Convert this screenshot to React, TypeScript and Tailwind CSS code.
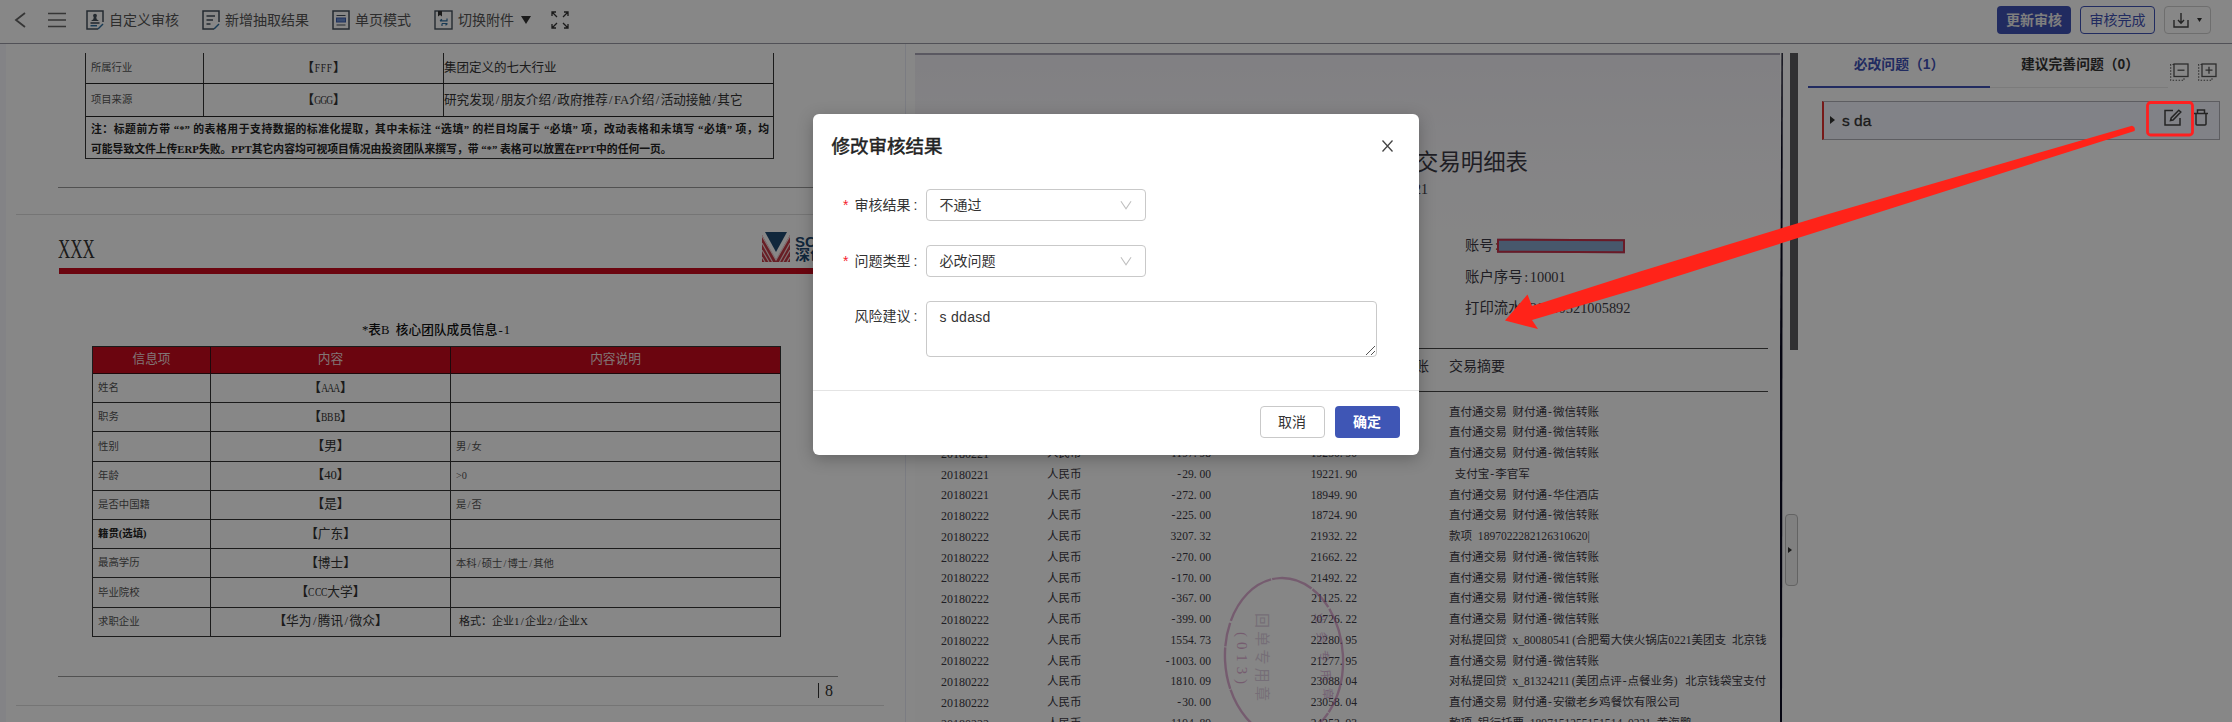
import type { ReactNode } from "react";

const sans = "font-['Liberation_Sans','Noto_Sans_CJK_SC',sans-serif]";
const song = "font-['Liberation_Serif','Noto_Sans_CJK_SC',serif]";

/* Half-width characters take half an em, as in a Chinese bitmap face. */
function Song({ text }: { text: string }) {
  return (
    <span>
      {text.split(/([. \-:/_(),])/).map((part, i) => {
        if (/^[\-:/_]$/.test(part)) {
          return <span key={i} className="inline-block w-[0.5em] text-center">{part}</span>;
        }
        if (part === "(") {
          return <span key={i} className="inline-block w-[0.5em] text-right">{part}</span>;
        }
        if (/^[. ),]$/.test(part)) {
          return <span key={i} className="inline-block w-[0.5em] whitespace-pre text-left">{part}</span>;
        }
        return part;
      })}
    </span>
  );
}

function Stretch({ className, children }: { className: string; children: ReactNode }) {
  return <div className={`whitespace-nowrap [text-align-last:justify] ${className}`}>{children}</div>;
}

function BackIcon() {
  return (
    <svg className="h-4 w-3" viewBox="0 0 12 16" fill="none" stroke="#666" strokeWidth="1.8">
      <path d="M11 1 L2 8 L11 15" />
    </svg>
  );
}

function MenuIcon() {
  return (
    <svg className="h-4 w-[18px]" viewBox="0 0 18 16" stroke="#666" strokeWidth="1.6">
      <path d="M0 1.5H18M0 8H18M0 14.5H18" />
    </svg>
  );
}

function AuditIcon() {
  return (
    <svg className="h-5 w-[18px]" viewBox="0 0 18 20" fill="none" stroke="#44505c" strokeWidth="1.5">
      <path d="M17 12V1H1V19H12" />
      <path d="M12 19L17 14" stroke="#2c6fa0" />
      <circle cx="9" cy="5.6" r="1.9" fill="#44505c" stroke="none" />
      <path d="M8 6h2l.7 3.2L13 11H5l2.300-1.800z" fill="#44505c" stroke="none" />
      <path d="M4.500 13H13.500" stroke="#3a4654" />
      <path d="M4.500 15.700H11" stroke="#2c6fa0" />
    </svg>
  );
}

function ExtractIcon() {
  return (
    <svg className="h-5 w-[18px]" viewBox="0 0 18 20" fill="none" stroke="#44505c" strokeWidth="1.5">
      <path d="M17 12V1H1V19H12" />
      <path d="M12 19L17 14" stroke="#2c6fa0" />
      <path d="M4.500 6H13M4.500 10H11M4.500 14H8.500" strokeWidth="1.3" />
    </svg>
  );
}

function PageIcon() {
  return (
    <svg className="h-5 w-[18px]" viewBox="0 0 18 20" fill="none" stroke="#44505c" strokeWidth="1.5">
      <rect x="1" y="1" width="16" height="18" />
      <path d="M4.500 5.500H13.500M4.500 15H13.500" strokeWidth="1.2" />
      <rect x="4.500" y="8" width="9" height="4" fill="#6a8fd0" stroke="#3d5fb0" strokeWidth="1" />
    </svg>
  );
}

function SwitchIcon() {
  return (
    <svg className="h-5 w-[19px]" viewBox="0 0 19 20" fill="none" stroke="#44505c" strokeWidth="1.4">
      <rect x="1" y="1" width="17" height="18" />
      <path d="M4 1V6.500L6 5L8 6.500V1z" fill="#333" stroke="none" />
      <path d="M13 8.500V10.800H6M8 13.500H13.500M8 13.500V16M6 10.800L8 9.300M13.500 13.500L11.500 15.200" stroke="#2c6fa0" strokeWidth="1.2" />
    </svg>
  );
}

function ExpandIcon() {
  return (
    <svg className="h-[18px] w-[18px]" viewBox="0 0 18 18" fill="none" stroke="#333" strokeWidth="1.3">
      <path d="M1 5V1H5M1 1L6 6M13 1H17V5M17 1L12 6M1 13V17H5M1 17L6 12M17 13V17H13M17 17L12 12" />
    </svg>
  );
}

function Toolbar() {
  return (
    <header className="flex h-11 shrink-0 items-center border-b border-[#9a9aa4] pb-[3px] text-[14px] text-[#555]">
      <div className="ml-[14px]"><BackIcon /></div>
      <div className="ml-[22px]"><MenuIcon /></div>
      <div className="ml-5 flex items-center gap-[5px]"><AuditIcon /><span>自定义审核</span></div>
      <div className="ml-[23px] flex items-center gap-[5px]"><ExtractIcon /><span>新增抽取结果</span></div>
      <div className="ml-[23px] flex items-center gap-[5px]"><PageIcon /><span>单页模式</span></div>
      <div className="ml-[23px] flex items-center gap-[5px]">
        <SwitchIcon />
        <span>切换附件</span>
        <svg className="ml-0.5 h-2 w-[10px]" viewBox="0 0 10 8" fill="#333"><path d="M0 0H10L5 8z" /></svg>
      </div>
      <div className="ml-[20px]"><ExpandIcon /></div>
      <div className="ml-auto flex items-center gap-[9px] pr-[21px] text-[14px]">
        <button className="flex h-7 w-[74px] items-center justify-center rounded bg-[#3f51b5] font-bold text-[#eee]">更新审核</button>
        <button className="flex h-7 w-[75px] items-center justify-center rounded border border-[#3f51b5] text-[#3f51b5]">审核完成</button>
        <button className="flex h-7 w-[47px] items-center justify-center gap-2 rounded-sm border border-[#d0d0d0]">
          <svg className="h-[15px] w-[16px]" viewBox="0 0 16 15" fill="none" stroke="#444" strokeWidth="1.4">
            <path d="M1 7V14H15V7M8 0V10M5 7L8 10.300L11 7" />
          </svg>
          <svg className="h-1 w-[5px]" viewBox="0 0 5 4" fill="#333"><path d="M0 0H5L2.500 4z" /></svg>
        </button>
      </div>
    </header>
  );
}

const members: { name: string; value: string; note?: string; bold?: boolean; last?: boolean }[] = [
  { name: "姓名", value: "AAA" },
  { name: "职务", value: "BBB" },
  { name: "性别", value: "男", note: "男/女" },
  { name: "年龄", value: "40", note: ">0" },
  { name: "是否中国籍", value: "是", note: "是/否" },
  { name: "籍贯(选填)", value: "广东", bold: true },
  { name: "最高学历", value: "博士", note: "本科/硕士/博士/其他" },
  { name: "毕业院校", value: "CCC大学" },
  { name: "求职企业", value: "华为/腾讯/微众", note: "格式：企业1/企业2/企业X", last: true },
];

function Bracket({ text }: { text: string }) {
  return (
    <span className="whitespace-nowrap">
      <b>【</b>
      {text.split(/([A-Z]+)/).map((part, i) =>
        /^[A-Z]+$/.test(part) ? (
          <span key={i} className="inline-flex">
            {part.split("").map((c, j) => (
              <span key={j} className="flex w-[0.5em] justify-center"><span className="scale-x-[0.75]">{c}</span></span>
            ))}
          </span>
        ) : (
          <Song key={i} text={part} />
        ),
      )}
      <b>】</b>
    </span>
  );
}

function Logo() {
  return (
    <svg className="h-[31px] w-7 shrink-0" viewBox="0 0 28 31">
      <path d="M0 3L14 28L28 3V30H0z" fill="#c43a46" />
      <path d="M0 4L14 28L28 4M0 11L10.500 30M0 18L7 30M0 25L3 30M28 11L17.500 30M28 18L21 30M28 25L25 30" fill="none" stroke="#f3d5d8" strokeWidth="1.2" />
      <path d="M3 0H25L14 20z" fill="#1f4a72" />
    </svg>
  );
}

function SlideDocument() {
  return (
    <section className={`w-[905px] shrink-0 overflow-hidden border-l-[6px] border-[#f8f8fd] pt-[9px] text-[#333] ${song}`}>
      <div className="ml-[79px] w-[689px] border-x-[1.5px] border-b-[1.5px] border-[#333]">
        <div className="grid h-[31px] grid-cols-[118px_240px_1fr] border-b-[1.5px] border-[#222] text-[12.5px]">
          <div className="flex items-center border-r-[1.5px] border-[#333] pl-[5px] text-[10.3px] text-[#555]">所属行业</div>
          <div className="flex items-center justify-center border-r-[1.5px] border-[#333]"><Bracket text="FFF" /></div>
          <div className="flex items-center"><span>集团定义的七大行业</span></div>
        </div>
        <div className="grid h-[33px] grid-cols-[118px_240px_1fr] border-b-[1.5px] border-[#222] text-[12.6px]">
          <div className="flex items-center border-r-[1.5px] border-[#333] pl-[5px] text-[10.3px] text-[#555]">项目来源</div>
          <div className="flex items-center justify-center border-r-[1.5px] border-[#333]"><Bracket text="GGG" /></div>
          <div className="flex items-center"><Song text="研究发现/朋友介绍/政府推荐/FA介绍/活动接触/其它" /></div>
        </div>
        <div className="h-[41px] pl-[5px] pt-[3px] text-[10.8px] font-bold leading-[19.500px] text-[#222]">
          <Stretch className="w-[678px]">注：标题前方带 “*” 的表格用于支持数据的标准化提取，其中未标注 “选填” 的栏目均属于 “必填” 项，改动表格和未填写 “必填” 项，均</Stretch>
          <Stretch className="w-[573px]">可能导致文件上传ERP失败。PPT其它内容均可视项目情况由投资团队来撰写，带 “*” 表格可以放置在PPT中的任何一页。</Stretch>
        </div>
      </div>
      <div className="ml-[52px] mt-[28px] w-[780px] border-t border-[#999]" />
      <div className="ml-[10px] mt-[26px] w-[868px] border-t border-[#ddd]" />

      <div className="ml-[52px] mt-[17px] flex h-[36px] w-[780px] items-start">
        <span className="w-[37px] text-[27px] leading-[34px]"><span className="inline-block origin-left scale-x-[0.63]">XXX</span></span>
        <div className="ml-[667px] flex items-center gap-[5px] font-['Liberation_Sans','Noto_Sans_CJK_SC',sans-serif] text-[#1f4a72]">
          <Logo />
          <div className="whitespace-nowrap text-[15px] font-bold leading-[13px]">SC<br />深创</div>
        </div>
      </div>
      <div className="ml-[53px] h-[6px] w-[780px] bg-[#ca0a1e]" />
      <h2 className="mt-[46px] w-[860px] text-center text-[12.7px] font-medium leading-5 text-[#111]">
        <Song text="*表B 核心团队成员信息-1" />
      </h2>
      <div className="ml-[86px] mt-[6px] w-[689px] border-x-[1.5px] border-t-[1.5px] border-[#333]">
        <div className="grid h-[27px] grid-cols-[118px_240px_1fr] border-b-[1.5px] border-[#3a1015] bg-[#ca0a1e] text-[12.7px] text-[#f3dede]">
          <div className="flex items-center justify-center border-r-[1.500px] border-[#3a1015]">信息项</div>
          <div className="flex items-center justify-center border-r-[1.500px] border-[#3a1015]">内容</div>
          <div className="flex items-center justify-center">内容说明</div>
        </div>
        {members.map((m) => (
          <div key={m.name} className="grid h-[29.200px] grid-cols-[118px_240px_1fr] border-b-[1.5px] border-[#333] text-[12.700px]">
            <div className={`flex items-center border-r-[1.5px] border-[#333] pl-[5px] text-[10.4px] ${m.bold ? "font-bold text-[#222]" : "text-[#555]"}`}>{m.name}</div>
            <div className="flex items-center justify-center border-r-[1.5px] border-[#333]"><Bracket text={m.value} /></div>
            <div className={`flex items-center ${m.last ? "pl-2 text-[11px]" : "pl-[5px] text-[10.300px] text-[#555]"}`}>
              {m.note && <Song text={m.note} />}
            </div>
          </div>
        ))}
      </div>
      <div className="ml-[52px] mt-[39px] w-[780px] border-t border-[#999]" />
      <div className="ml-[52px] flex h-[28px] w-[780px] items-center justify-end gap-[6px] pr-[5px] text-[16px]">
        <span className="h-[15px] w-px bg-[#333]" />8
      </div>
      <div className="ml-[10px] w-[868px] border-t border-[#ddd]" />
    </section>
  );
}

const pay = "直付通交易 财付通-微信转账";
const transactions: [string, string, string, string, string][] = [
  ["", "", "", "", pay],
  ["", "", "", "", pay],
  ["20180221", "人民币", "1197.98", "19250.90", pay],
  ["20180221", "人民币", "-29.00", "19221.90", " 支付宝-李官军"],
  ["20180221", "人民币", "-272.00", "18949.90", "直付通交易 财付通-华住酒店"],
  ["20180222", "人民币", "-225.00", "18724.90", pay],
  ["20180222", "人民币", "3207.32", "21932.22", "款项 1897022282126310620|"],
  ["20180222", "人民币", "-270.00", "21662.22", pay],
  ["20180222", "人民币", "-170.00", "21492.22", pay],
  ["20180222", "人民币", "-367.00", "21125.22", pay],
  ["20180222", "人民币", "-399.00", "20726.22", pay],
  ["20180222", "人民币", "1554.73", "22280.95", "对私提回贷 x_80080541(合肥蜀大侠火锅店0221美团支 北京钱"],
  ["20180222", "人民币", "-1003.00", "21277.95", pay],
  ["20180222", "人民币", "1810.09", "23088.04", "对私提回贷 x_81324211(美团点评-点餐业务) 北京钱袋宝支付"],
  ["20180222", "人民币", "-30.00", "23058.04", "直付通交易 财付通-安徽老乡鸡餐饮有限公司"],
  ["20180222", "人民币", "1194.89", "24252.93", "款项 银行托票 1897151255151514 0221 黄海鹏"],
];

function Stamp() {
  return (
    <svg className="absolute left-[306px] top-[520px] h-[166px] w-[126px] opacity-50" viewBox="0 0 126 166" fill="none">
      <ellipse cx="63" cy="83" rx="59" ry="80" stroke="#c060a8" strokeWidth="2.4" strokeDasharray="60 1 42 1 24 2" transform="rotate(-3 63 83)" />
      <g fill="#c0a4c4" fontFamily="'Liberation Serif','Noto Sans CJK SC',serif" fontSize="15">
        <text transform="translate(16 57) rotate(90)" textLength="52" fill="#c060a8">(013)</text>
        <text transform="translate(36 38) rotate(90)" textLength="88">回单专用章</text>
        <text transform="translate(94 38) rotate(84)" textLength="88" fill="#b872b8" fontSize="12">业务专用章</text>
      </g>
    </svg>
  );
}

function StatementScan() {
  return (
    <section className={`relative flex w-[893px] shrink-0 overflow-hidden border-l border-[#e9ebf6] pl-[9px] pt-[9px] text-[#3c3a44] ${song}`}>
      <div className="relative flex h-[669px] w-[865px] shrink-0 flex-col overflow-hidden border-t-2 border-[#aaa6b8] bg-[#fdfdfe] bg-[linear-gradient(180deg,#f3f1f7_0px,#fbfafd_110px,#fefefe_200px)]">
        <div className="ml-[501px] mt-[91px] flex h-[34px] shrink-0 items-center text-[22.4px]">交易明细表</div>
        <div className="ml-[499px] flex h-[18px] shrink-0 items-center text-[14px]">21</div>
        <div className="ml-[550px] mt-[40px] flex h-4 shrink-0 items-center text-[14.200px]">
          <Song text="账号:" />
          <span className="-ml-[3px] h-[14px] w-[128px] rotate-[0.3deg] border-2 border-[#c8324a] bg-[#86a6cc]" />
        </div>
        <div className="ml-[550px] mt-[16px] flex h-4 shrink-0 items-center text-[14.400px]"><Song text="账户序号:10001" /></div>
        <div className="ml-[550px] mt-[15px] flex h-4 shrink-0 items-center text-[14.400px]"><Song text="打印流水:20180521005892" /></div>
        <div className="mt-[31px] flex h-[44px] w-[853px] shrink-0 items-center border-y-[1.500px] border-[#444] pb-[7px] text-[14px]">
          <span className="ml-[500px]">账</span>
          <span className="ml-[20px]">交易摘要</span>
        </div>
        <div className="mt-[10px] text-[11.560px]">
          {transactions.map((t, i) => (
            <div key={i} className="grid h-[20.75px] grid-cols-[132px_34px_130px_146px_1fr] items-center whitespace-nowrap">
              <span className="pl-[26px] text-[12px]">{t[0]}</span>
              <span>{t[1]}</span>
              <span className="text-right"><Song text={t[2]} /></span>
              <span className="text-right"><Song text={t[3]} /></span>
              <span className="pl-[92px]"><Song text={t[4]} /></span>
            </div>
          ))}
        </div>
        <Stamp />
      </div>
      <svg className="-ml-px h-[669px] w-[4px] shrink-0" viewBox="0 0 4 669" preserveAspectRatio="none"><path d="M2.500 0H3.800L3 669H0L1 300z" fill="#0a0a20" /></svg>
      <div className="ml-auto h-[297px] w-2 shrink-0 bg-[#5c5c5f]" />
      <button className="absolute bottom-[136px] right-0 flex h-[72px] w-[13px] items-center rounded-sm border border-[#bbb] bg-[#f2f2f2] pl-[2px]">
        <svg className="h-[6px] w-1" viewBox="0 0 4 6" fill="#333"><path d="M0 0L4 3L0 6z" /></svg>
      </button>
    </section>
  );
}

function CollapseIcon({ plus }: { plus?: boolean }) {
  return (
    <svg className="h-[18px] w-[19px]" viewBox="0 0 19 18" fill="none" stroke="#555" strokeWidth="1.3">
      <rect x="4" y="1" width="14" height="12.500" />
      <path d={plus ? "M7.500 7.200H14.500M11 3.800V10.700" : "M7.500 7.200H14.500"} />
      <path d="M4 1.500H0.700V17.300H14V14" strokeDasharray="1.500 1.500" strokeWidth="1.100" />
    </svg>
  );
}

function IssuePanel() {
  return (
    <aside className="flex flex-1 flex-col">
      <div className="ml-[10px] flex h-11 text-[13.8px] font-bold">
        <div className="flex w-[182px] items-center justify-center border-b-2 border-[#3f51b5] text-[#3f51b5]">
          必改问题（1）
        </div>
        <div className="flex w-[178px] items-center justify-center border-b border-[#e8e8e8] pl-[2px] text-[#333]">
          <span className="whitespace-nowrap">建议完善问题（0）</span>
        </div>
        <div className="flex items-center gap-[9px] pl-[2px] pt-[12px]">
          <CollapseIcon />
          <CollapseIcon plus />
        </div>
      </div>
      <div className="ml-6 mr-3 mt-[13px] flex h-[39px] items-center border border-l-2 border-[#b0b0b8] border-l-[#e03030] bg-[#f4f6ff] text-[15.5px] text-[#333]">
        <svg className="ml-[6px] h-[8px] w-[5px] -translate-y-px" viewBox="0 0 5 8" fill="#333"><path d="M0 0L5 4L0 8z" /></svg>
        <span className="ml-[7px] [-webkit-text-stroke:0.3px_#333]">s da</span>
        <svg className="ml-auto h-[17px] w-[18px] -translate-y-[3px]" viewBox="0 0 18 17" fill="none" stroke="#444" strokeWidth="1.5">
          <path d="M9 1.500H1V16H16V9M14.800 1.200L16.800 3L9 11L6.500 11.600L7.200 9z" />
        </svg>
        <svg className="ml-[12px] mr-[11px] h-[17px] w-[14px] -translate-y-[3px]" viewBox="0 0 14 17" fill="none" stroke="#444" strokeWidth="1.500">
          <path d="M0 4.500H14M2 4.500V15Q2 16 3 16H11Q12 16 12 15V4.500M3.500 4V1H10.500V4" />
        </svg>
      </div>
    </aside>
  );
}

function SelectField({ label, value }: { label: string; value: string }) {
  return (
    <div className="mb-6 flex h-8 items-center">
      <span className="w-[94px] text-right"><span className="mr-[6px] text-[#f5222d]">*</span>{label}<span className="ml-[3px] inline-block w-[6px] text-left">:</span></span>
      <div className="ml-[6px] flex h-8 w-[220px] items-center justify-between rounded border border-[#c9c9c9] pl-[13px] pr-[13px]">
        {value}
        <svg className="h-[10px] w-[12px]" viewBox="0 0 13 10" fill="none" stroke="#bfbfbf" strokeWidth="1.2"><path d="M1 1L6.500 9L12 1" /></svg>
      </div>
    </div>
  );
}

function EditDialog() {
  return (
    <div className="mr-px mt-[114px] flex h-[341px] w-[606px] flex-col rounded-md bg-white text-[14px] text-[#333] shadow-[0_4px_16px_rgba(0,0,0,0.25)]">
      <div className="flex h-[75px] items-start justify-between pl-[19px] pr-[26px] pt-[19px]">
        <h1 className="text-[18.500px] leading-7 text-[#222] [-webkit-text-stroke:0.5px_#222]">修改审核结果</h1>
        <svg className="mt-[7px] h-3 w-[11px]" viewBox="0 0 11 12" fill="none" stroke="#444" strokeWidth="1.3"><path d="M0.500 0.500L10.500 11.500M10.500 0.500L0.500 11.500" /></svg>
      </div>
      <div className="flex-1 pl-[13px]">
        <SelectField label="审核结果" value="不通过" />
        <SelectField label="问题类型" value="必改问题" />
        <div className="flex">
          <span className="w-[94px] pt-[4px] text-right leading-[22px]">风险建议<span className="ml-[3px] inline-block w-[6px] text-left">:</span></span>
          <div className="ml-[6px] flex h-14 w-[451px] justify-between rounded border border-[#c9c9c9] pl-[13px] pt-1 leading-[22px]">
            <span className="tracking-[0.3px]">s ddasd</span>
            <svg className="mb-px mr-px h-[9px] w-[9px] self-end" viewBox="0 0 9 9" stroke="#555" strokeWidth="1"><path d="M0 9L9 0M5 9L9 5" /></svg>
          </div>
        </div>
      </div>
      <div className="flex h-[65px] items-start justify-end gap-[10px] border-t border-[#e4e4e4] pr-[19px] pt-[15px]">
        <button className="flex h-8 w-[65px] items-center justify-center rounded border border-[#c9c9c9]">取消</button>
        <button className="flex h-8 w-[65px] items-center justify-center rounded bg-[#3f56b5] font-bold text-white">确定</button>
      </div>
    </div>
  );
}

export default function App() {
  return (
    <div className={`relative flex h-[722px] w-[2232px] flex-col overflow-hidden bg-white ${sans}`}>
      <Toolbar />
      <main className="flex min-h-0 flex-1">
        <SlideDocument />
        <StatementScan />
        <IssuePanel />
      </main>
      <div className="absolute inset-0 flex items-start justify-center bg-black/[0.47]">
        <EditDialog />
      </div>
      <svg className="pointer-events-none absolute inset-0 h-full w-full" viewBox="0 0 2232 722">
        <rect x="2147.500" y="102.500" width="45" height="32.500" rx="3" fill="none" stroke="#ff2020" strokeWidth="2.800" />
        <path d="M1505 320.500L1527.500 294.500L1532 306L1640 271.500L1820 216.500L2132 125.700Q2136 127 2134.500 131L1820 231L1640 288L1532 320L1538 329z" fill="#ff2319" />
      </svg>
    </div>
  );
}
